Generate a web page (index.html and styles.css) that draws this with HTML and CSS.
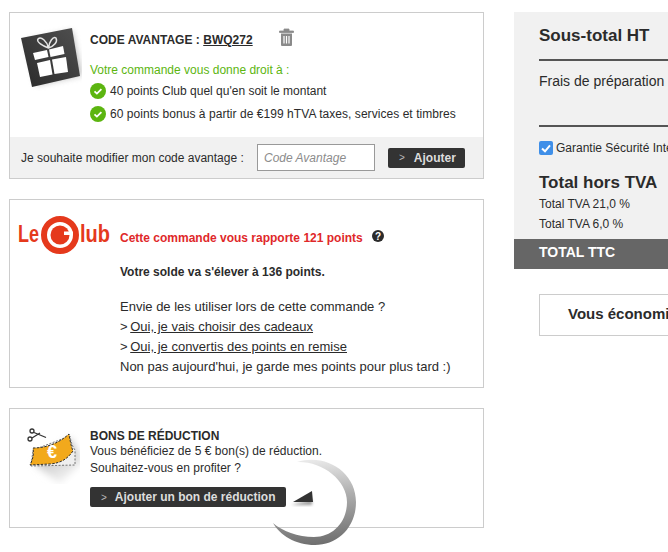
FILE: index.html
```html
<!DOCTYPE html>
<html lang="fr">
<head>
<meta charset="utf-8">
<title>Panier</title>
<link rel="stylesheet" href="styles.css">
</head>
<body>
<div class="page">
  <main class="left">
    <section class="box box-code">
      <div class="code-main">
        <svg class="gift" width="72" height="74" viewBox="0 0 72 74" aria-hidden="true">
          <defs>
            <filter id="blur1" x="-30%" y="-30%" width="160%" height="160%"><feGaussianBlur stdDeviation="3"/></filter>
            <linearGradient id="giftbg" x1="0" y1="1" x2="1" y2="0"><stop offset="0" stop-color="#2a2a2a"/><stop offset="1" stop-color="#505050"/></linearGradient>
          </defs>
          <polygon points="16,24 62,14 72,58 26,68" fill="#888" opacity=".6" filter="url(#blur1)"/>
          <polygon points="11,21 62,11 70,59 22,70" fill="url(#giftbg)"/>
          <g fill="#fff">
            <polygon points="23,36 37,33 38.500,40 25,43"/>
            <polygon points="39,32.500 53,29 54.500,37 40.500,40"/>
            <polygon points="27,46 40,43 42.500,57.500 30,60"/>
            <polygon points="42,42.600 56,40 58,55 44.500,57"/>
          </g>
          <path d="M38.500,31 C33,29 26,25 28,22 C31,19 37,24 38.500,31 C39,25 43,19 46,21 C48,25 44,29 38.500,31Z" fill="none" stroke="#e4e4e4" stroke-width="1.500"/>
        </svg>
        <div class="code-text">
          <div class="code-title">
            <span>CODE AVANTAGE : <u>BWQ272</u></span>
            <svg class="trash" width="15" height="18" viewBox="0 0 15 18" aria-hidden="true">
              <path d="M0.500,3h14v1.500H0.500zM5,3V1h5v2" fill="#8a8a8a" stroke="#8a8a8a" stroke-width=".8"/>
              <path d="M2,5.500h11V17a1,1 0 0 1-1,1H3a1,1 0 0 1-1-1z" fill="#8a8a8a"/>
              <path d="M5,8v7.500M7.500,8v7.500M10,8v7.500" stroke="#fff" stroke-width="1.200"/>
            </svg>
          </div>
          <p class="green">Votre commande vous donne droit à :</p>
          <ul class="perks">
            <li>
              <svg class="check" width="16" height="16" viewBox="0 0 16 16" aria-hidden="true"><circle cx="8" cy="8" r="8" fill="#5cb510"/><path d="M4.500,8.300l2.400,2.300 4.500-4.500" fill="none" stroke="#fff" stroke-width="1.800"/></svg>
              <span>40 points Club quel qu'en soit le montant</span>
            </li>
            <li>
              <svg class="check" width="16" height="16" viewBox="0 0 16 16" aria-hidden="true"><circle cx="8" cy="8" r="8" fill="#5cb510"/><path d="M4.500,8.300l2.400,2.300 4.500-4.500" fill="none" stroke="#fff" stroke-width="1.800"/></svg>
              <span class="perk-wide">60 points bonus à partir de €199 hTVA taxes, services et timbres</span>
            </li>
          </ul>
        </div>
      </div>
      <form class="code-form">
        <label class="code-label" for="code">Je souhaite modifier mon code avantage :</label>
        <input class="code-input" id="code" type="text" placeholder="Code Avantage">
        <button class="btn btn-add" type="button"><span class="chev">&gt;</span>Ajouter</button>
      </form>
    </section>

    <section class="box box-club">
      <div class="club-head">
        <svg class="club-logo" width="100" height="40" viewBox="0 0 100 40" role="img" aria-label="Le Club">
          <text x="1" y="27" class="logo-text" textLength="21" lengthAdjust="spacingAndGlyphs">Le</text>
          <circle cx="43" cy="20" r="16" fill="none" stroke="#e5391c" stroke-width="6"/>
          <circle cx="43" cy="20" r="9.500" fill="#e5391c"/>
          <rect x="47" y="16.500" width="9" height="3.500" fill="#fff"/>
          <text x="63" y="27" class="logo-text" textLength="30" lengthAdjust="spacingAndGlyphs">lub</text>
        </svg>
        <strong class="club-red">Cette commande vous rapporte 121 points</strong>
        <svg class="help" width="12" height="12" viewBox="0 0 12 12" aria-hidden="true"><circle cx="6" cy="6" r="6" fill="#2b2b2b"/><text x="6" y="9.500" class="help-q">?</text></svg>
      </div>
      <div class="club-body">
        <p class="club-solde">Votre solde va s'élever à 136 points.</p>
        <p class="club-line">Envie de les utiliser lors de cette commande ?</p>
        <p class="club-line">&gt; <a href="#">Oui, je vais choisir des cadeaux</a></p>
        <p class="club-line">&gt; <a href="#">Oui, je convertis des points en remise</a></p>
        <p class="club-line">Non pas aujourd'hui, je garde mes points pour plus tard :)</p>
      </div>
    </section>

    <section class="box box-bons">
      <svg class="coupon" width="60" height="66" viewBox="0 0 60 66" aria-hidden="true">
        <defs>
          <filter id="blur2" x="-40%" y="-40%" width="180%" height="180%"><feGaussianBlur stdDeviation="3.500"/></filter>
          <linearGradient id="cshadow" x1="0.300" y1="0.200" x2="0.800" y2="1"><stop offset="0" stop-color="#bbb"/><stop offset="1" stop-color="#fff"/></linearGradient>
        </defs>
        <polygon points="14,46 50,20 64,42 40,66" fill="url(#cshadow)" filter="url(#blur2)"/>
        <path d="M13,32 L50,18 C51,24 52,28 55,32 L55,47 L11,48Z" fill="#efefef" stroke="#555" stroke-width=".8" stroke-dasharray="2 1.500"/>
        <path d="M13,30 C25,30 38,26 49,16 C50,22 51,28 53,33 C48,40 42,45 30,46 L10,47 C13,41 14,36 13,30Z" fill="#f2a91c" stroke="#2e2e2e" stroke-width="1" stroke-dasharray="2.500 1.300"/>
        <text x="32" y="40" class="coupon-euro">€</text>
        <g fill="none" stroke="#333" stroke-width="1.300">
          <circle cx="12" cy="13" r="2"/>
          <circle cx="10" cy="21" r="2"/>
          <path d="M14,14.500 L26,19.500M12,20 L20,15"/>
        </g>
      </svg>
      <div class="bons-text">
        <h2 class="bons-title">BONS DE RÉDUCTION</h2>
        <p class="bons-line">Vous bénéficiez de 5 € bon(s) de réduction.</p>
        <p class="bons-line">Souhaitez-vous en profiter ?</p>
        <button class="btn btn-bon" type="button"><span class="chev">&gt;</span>Ajouter un bon de réduction</button>
      </div>
      <svg class="spinner" width="110" height="100" viewBox="0 0 110 100" aria-hidden="true">
        <defs>
          <linearGradient id="ring" x1="0.300" y1="0" x2="0.400" y2="1">
            <stop offset="0" stop-color="#ececec"/>
            <stop offset=".45" stop-color="#aeaeae"/>
            <stop offset="1" stop-color="#707070"/>
          </linearGradient>
          <filter id="blur3" x="-40%" y="-40%" width="180%" height="180%"><feGaussianBlur stdDeviation="1.800"/></filter>
        </defs>
        <polygon points="29,52 50,52 50,47" fill="#999" filter="url(#blur3)"/>
        <polygon points="31,49 50,38 51,49" fill="#333"/>
        <path d="M35,9 C65,0 94,20 94,49 C94,75 75,92 53,92 C33,92 18,82 11,70 C20,78 36,84 52,84 C71,84 85,69 85,49 C85,27 60,8 35,9Z" fill="url(#ring)"/>
      </svg>
    </section>
  </main>

  <aside class="right">
    <div class="summary">
      <div class="sum-inner">
        <div class="sum-head">Sous-total HT</div>
        <div class="sum-fees">Frais de préparation</div>
        <label class="sum-check">
          <svg class="tick" width="14" height="14" viewBox="0 0 14 14" aria-hidden="true"><rect width="14" height="14" rx="2" fill="#3f8fe8"/><path d="M3,7.500l3,2.800 5-6" fill="none" stroke="#fff" stroke-width="2"/></svg>
          <span>Garantie Sécurité Intérieure</span>
        </label>
        <div class="sum-total">Total hors TVA</div>
        <div class="sum-tva">Total TVA 21,0 %</div>
        <div class="sum-tva">Total TVA 6,0 %</div>
      </div>
      <div class="sum-ttc">TOTAL TTC</div>
    </div>
    <div class="saving">Vous économisez</div>
  </aside>
</div>
</body>
</html>
```
FILE: styles.css
```css
* { box-sizing: border-box; }
html, body { margin: 0; padding: 0; height: 100%; overflow: hidden; background: #fff; }
body { font-family: "Liberation Sans", Arial, sans-serif; font-size: 12px; color: #2b2b2b; }
p, ul, h2 { margin: 0; padding: 0; }
.page { display: flex; gap: 30px; width: 668px; padding: 12px 0 0 9px; }
.left { position: relative; flex: none; width: 475px; display: flex; flex-direction: column; gap: 20px; }
.box { border: 1px solid #ccc; background: #fff; }

/* code avantage */
.box-code { height: 167px; display: flex; flex-direction: column; }
.code-main { flex: 1; display: flex; }
.gift { flex: none; margin: 4px 8px 0 0; }
.code-text { padding-top: 18px; }
.code-title { display: flex; align-items: center; gap: 26px; font-weight: 700; height: 18px; font-size: 12px; letter-spacing: .02px; }
.code-title u { text-decoration-thickness: 1px; }
.trash { flex: none; margin-top: -6px; }
.green { color: #5cb510; margin-top: 14px; line-height: 14px; }
.perks { list-style: none; margin-top: 2px; }
.perks li { display: flex; align-items: center; gap: 4px; height: 23px; }
.perk-wide { letter-spacing: .05px; }
.check { flex: none; }
.code-form { height: 41px; background: #f1f1f1; margin: 0; display: flex; align-items: center; padding: 0 0 0 11px; flex: none; }
.code-label { width: 236px; flex: none; }
.code-input { width: 118px; height: 27px; border: 1px solid #999; background: #fff; padding: 0 6px; font: italic 12px "Liberation Sans", Arial, sans-serif; margin: 0; outline: 0; }
.code-input::placeholder { color: #8c8c8c; opacity: 1; }
.btn { display: flex; align-items: center; border: 0; background: #333; color: #ddd; font: 700 12px "Liberation Sans", Arial, sans-serif; border-radius: 2px; height: 20px; padding: 0; }
.chev { color: #bbb; font-weight: 400; font-size: 10px; }
.btn-add { width: 77px; margin-left: 13px; padding-left: 11px; }
.btn-add .chev { margin-right: 9px; }

/* club */
.box-club { height: 189px; }
.club-head { display: flex; align-items: center; height: 40px; margin-top: 15px; padding-left: 7px; }
.club-logo { flex: none; margin-right: 3px; }
.logo-text { font: 700 24px "Liberation Sans", Arial, sans-serif; fill: #e5391c; }
.club-red { color: #e0282a; font-size: 12px; margin-top: 5px; }
.help { flex: none; margin: 2px 0 0 9px; }
.help-q { font: 700 10px "Liberation Sans", Arial, sans-serif; fill: #fff; text-anchor: middle; }
.club-body { padding: 9px 0 0 110px; }
.club-solde { font-weight: 700; line-height: 16px; margin-bottom: 17px; }
.club-line { line-height: 20px; font-size: 13px; }
.club-line a { color: #2b2b2b; text-decoration: underline; margin-left: -1px; }

/* bons */
.box-bons { position: relative; height: 120px; display: flex; padding: 0 0 0 10px; }
.coupon { flex: none; margin-top: 9px; }
.coupon-euro { font: 700 18px "Liberation Sans", Arial, sans-serif; fill: #fff; text-anchor: middle; }
.bons-text { padding: 20px 0 0 10px; }
.bons-title { font-size: 12px; font-weight: 700; line-height: 14px; }
.bons-line { line-height: 17px; letter-spacing: .03px; }
.btn-bon { width: 196px; margin-top: 10px; padding-left: 11px; }
.btn-bon .chev { margin-right: 8px; }
.spinner { position: absolute; left: 252px; top: 44px; }

/* right */
.right { flex: none; width: 154px; overflow: hidden; }
.summary { background: #f1f1f1; }
.sum-inner { padding: 0 0 0 25px; height: 227px; }
.sum-head { font-size: 17px; font-weight: 700; line-height: 47px; height: 49px; border-bottom: 2px solid #555; width: 360px; }
.sum-fees { font-size: 14px; height: 66px; padding-top: 12px; line-height: 17px; border-bottom: 2px solid #555; width: 360px; white-space: nowrap; }
.sum-check { display: flex; align-items: center; gap: 3px; margin-top: 14px; height: 14px; white-space: nowrap; font-size: 12px; }
.tick { flex: none; }
.sum-total { font-size: 17px; font-weight: 700; line-height: 20px; margin-top: 18px; }
.sum-tva { line-height: 20px; font-size: 12px; position: relative; top: 1px; }
.sum-ttc { background: #666; color: #fff; font-weight: 700; font-size: 14px; height: 30px; line-height: 26px; padding-left: 25px; }
.saving { margin: 25px 0 0 25px; width: 400px; height: 42px; border: 1px solid #ccc; border-right: 0; background: #fff; font-size: 15px; font-weight: 700; line-height: 38px; padding-left: 28px; white-space: nowrap; }
```
